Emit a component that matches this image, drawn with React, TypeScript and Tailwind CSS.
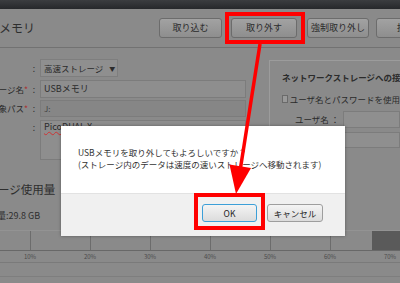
import React from "react";

const F = "font-['Noto_Sans_CJK_JP','Noto_Sans',sans-serif]";

function Btn({ w, label, ml }: { w: string; label: string; ml: string }) {
  return (
    <div
      className={`${w} ${ml} h-[20px] shrink-0 rounded-[3px] border border-[#6c6c6c] bg-gradient-to-b from-[#a2a2a2] to-[#8e8e8e] flex items-center justify-center text-[9px] text-[#2a2a2a] overflow-hidden whitespace-nowrap`}
    >
      {label}
    </div>
  );
}

export default function App() {
  const ticks = ["10%", "20%", "30%", "40%", "50%", "60%", "70%"];
  return (
    <div className={`relative w-[400px] h-[283px] overflow-hidden bg-[#8a8a8a] text-[#2b2b2b] ${F}`}>
      {/* top bar */}
      <div className="h-[9px] bg-gradient-to-b from-[#3b3d40] to-[#26282b]" />
      {/* header */}
      <div className="h-[39px] flex items-center border-b border-[#727272]">
        <div className="w-[160px] shrink-0 ml-[-1px] text-[12px] leading-none text-[#2e2e2e]">メモリ</div>
        <Btn w="w-[63px]" ml="ml-0" label="取り込む" />
        <Btn w="w-[66px]" ml="ml-[9px]" label="取り外す" />
        <Btn w="w-[62px]" ml="ml-[10px]" label="強制取り外し" />
        <Btn w="w-[60px]" ml="ml-[7px]" label="接続" />
      </div>

      {/* main section */}
      <div className="h-[132px] flex">
        {/* left form */}
        <div className="w-[269px] shrink-0 flex flex-col text-[8.5px]">
          <div className="mt-[11px] h-[18px] flex items-center">
            <div className="w-[28px]" />
            <div className="w-[12px] text-center">:</div>
            <div className="h-[18px] w-[78px] border border-[#7e7e7e] bg-[#8f8f8f] flex items-center pl-[3px] gap-[6px] text-[8.5px] whitespace-nowrap">
              <span>高速ストレージ</span>
              <span className="text-[6px]">▼</span>
            </div>
          </div>
          <div className="mt-[3px] h-[18px] flex items-center">
            <div className="w-[28px] text-right whitespace-nowrap overflow-hidden flex justify-end">
              <span>ージ名</span>
              <span className="text-[#a33]">*</span>
            </div>
            <div className="w-[12px] text-center">:</div>
            <div className="h-[18px] w-[206px] border border-[#7c7c7c] bg-[#8e8e8e] flex items-center pl-[3px] text-[9px]">
              USBメモリ
            </div>
          </div>
          <div className="mt-[2px] h-[17px] flex items-center">
            <div className="w-[28px] text-right whitespace-nowrap overflow-hidden flex justify-end">
              <span>象パス</span>
              <span className="text-[#a33]">*</span>
            </div>
            <div className="w-[12px] text-center">:</div>
            <div className="h-[17px] w-[206px] border border-[#7c7c7c] bg-[#868686] flex items-center pl-[3px] text-[8px] text-[#444]">
              J:
            </div>
          </div>
          <div className="mt-[3px] flex items-start">
            <div className="w-[28px]" />
            <div className="w-[12px] text-center pt-[1px]">:</div>
            <div className="h-[40px] w-[206px] border border-[#7c7c7c] bg-[#8e8e8e] pl-[3px] text-[9px] leading-[12px]">
              <span className="underline decoration-wavy decoration-[#c33]">Pico</span>DUAL X
            </div>
          </div>
        </div>
        {/* right panel */}
        <div className="mt-[12px] h-[118px] flex-1 border-l border-t border-[#9c9c9c] pl-[12px] pt-[10px] text-[8.5px] whitespace-nowrap overflow-hidden">
          <div className="h-[12px] font-bold leading-[12px]">ネットワークストレージへの接続</div>
          <div className="mt-[10px] h-[12px] flex items-center gap-[2px]">
            <div className="w-[8px] h-[8px] border border-[#6a6a6a] bg-[#999]" />
            <span>ユーザ名とパスワードを使用</span>
          </div>
          <div className="mt-[6px] h-[17px] flex items-center">
            <span className="w-[64px] pl-[13px]">ユーザ名 ：</span>
            <div className="h-[17px] w-[60px] border border-[#7c7c7c] bg-[#8f8f8f]" />
          </div>
          <div className="mt-[4px] h-[16px] flex items-center">
            <span className="w-[64px]" />
            <div className="h-[16px] w-[60px] border border-[#7c7c7c] bg-[#8f8f8f]" />
          </div>
        </div>
      </div>

      {/* usage */}
      <div className="h-[20px] flex items-center ml-[-2px] text-[11.5px] leading-none text-[#2e2e2e] whitespace-nowrap">
        ージ使用量
      </div>
      <div className="mt-[8px] h-[16px] flex items-center ml-[-3px] text-[9px] text-[#2e2e2e]">量:29.8 GB</div>

      {/* chart */}
      <div className="mt-[6px] relative h-[21px] border-b border-[#686868] border-t border-t-[#939393]">
        <div className="flex h-full">
          {ticks.map((t) => (
            <div key={t} className="w-[60px] shrink-0 flex justify-center">
              <div className="w-[1px] h-full bg-[#6c6c6c]" />
            </div>
          ))}
        </div>
        <div className="absolute right-0 top-0 w-[28px] h-full bg-[#5a5a5a]" />
      </div>
      <div className="h-[12px] flex border-b border-[#7a7a7a]">
        {ticks.map((t) => (
          <div key={t} className="w-[60px] shrink-0 text-center text-[6px] leading-[12px] text-[#4a4a4a]">
            {t}
          </div>
        ))}
      </div>
      <div className="h-[14px] border-b border-[#7e7e7e]" />

      {/* dialog */}
      <div className="absolute left-[61px] top-[126px] w-[284px] h-[110px] bg-white shadow-[0_0_3px_rgba(0,0,0,0.35)] flex flex-col">
        <div className="h-[67px] pl-[17px] pt-[20px] text-[8.5px] leading-[12px] text-[#333] whitespace-nowrap">
          <div>USBメモリを取り外してもよろしいですか？</div>
          <div>(ストレージ内のデータは速度の速いストレージへ移動されます)</div>
        </div>
        <div className="flex-1 bg-[#f0f0f0] border-t border-[#e2e2e2] flex justify-end items-start pt-[10px] pr-[22px] gap-[10px]">
          <div className="w-[55px] h-[18px] rounded-[3px] border border-[#3c9fd8] bg-gradient-to-b from-[#f4f4f4] to-[#dcdcdc] flex items-center justify-center text-[8.5px] text-[#222]">
            OK
          </div>
          <div className="w-[56px] h-[18px] rounded-[3px] border border-[#9e9e9e] bg-gradient-to-b from-[#f4f4f4] to-[#dcdcdc] flex items-center justify-center text-[8.5px] text-[#222]">
            キャンセル
          </div>
        </div>
      </div>

      {/* annotations */}
      <svg className="absolute inset-0 pointer-events-none" width="400" height="283">
        <rect x="227" y="14" width="76" height="28" fill="none" stroke="#ff0000" strokeWidth="4" />
        <rect x="196" y="195" width="67" height="33" fill="none" stroke="#ff0000" strokeWidth="4" />
        <line x1="260" y1="44" x2="240.5" y2="168" stroke="#ff0000" strokeWidth="3.5" />
        <polygon points="229.5,164.5 251,168 236,194" fill="#ff0000" />
      </svg>
    </div>
  );
}
